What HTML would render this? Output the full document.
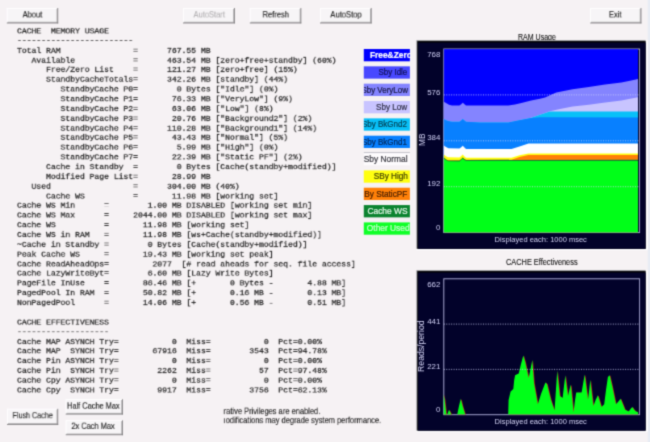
<!DOCTYPE html>
<html><head><meta charset="utf-8"><title>Cache Memory</title>
<style>
html,body{margin:0;padding:0;}
body{width:650px;height:442px;overflow:hidden;background:#f6f2f4;position:relative;font-family:"Liberation Sans",sans-serif;}
pre{position:absolute;left:17.2px;top:26.68px;margin:0;font-family:"Liberation Mono",monospace;font-size:10px;line-height:13.857px;color:#262626;-webkit-text-stroke:0.3px #262626;letter-spacing:0;width:500px;overflow:hidden;white-space:pre;transform:scale(0.8066,0.70);transform-origin:0 0;}
.btn{position:absolute;box-sizing:border-box;text-align:center;font-size:10px;transform:scale(0.8);transform-origin:0 0;color:#242424;-webkit-text-stroke:0.19px;white-space:nowrap;overflow:hidden;}
.btn span{display:inline-block;transform-origin:50% 50%;position:relative;top:0px;margin:0 -10px;}
.btn.dis{color:#b4b2b4;}
.leg{position:absolute;left:363.8px;width:46.1px;height:12.3px;overflow:hidden;font-size:8.4px;line-height:12.3px;white-space:nowrap;}
.leg span{position:absolute;top:0.2px;transform-origin:100% 50%;-webkit-text-stroke:0.2px;}
.ttl{position:absolute;font-size:8.6px;color:#161616;-webkit-text-stroke:0.12px;white-space:nowrap;transform-origin:0 50%;}
.note{position:absolute;left:223px;top:407px;width:240px;overflow:hidden;font-size:10px;color:#1c1c1c;-webkit-text-stroke:0.18px;white-space:pre;line-height:10.976px;transform:translate(0.6px,0.6px) scale(0.75,0.82);transform-origin:0 0;}
pre .d{position:relative;top:-1.1px;}
svg{position:absolute;left:0;top:0;z-index:0;}
.btn,.leg,.ttl,.note,pre{z-index:1;will-change:transform;}
svg{will-change:transform;}
svg text{font-family:"Liberation Sans",sans-serif;}
#w{position:absolute;left:0;top:0;width:650px;height:442px;overflow:hidden;background:#f6f2f4;filter:url(#gb);}
#fd{position:absolute;left:0;top:0;width:0;height:0;}
</style></head><body>
<svg id="fd" width="0" height="0"><defs><filter id="gb" x="0" y="0" width="100%" height="100%" color-interpolation-filters="sRGB"><feConvolveMatrix order="3" kernelMatrix="0.0276 0.1106 0.0276 0.1106 0.4444 0.1106 0.0276 0.1106 0.0276" edgeMode="duplicate" preserveAlpha="true"/></filter></defs></svg>
<div id="w">
<pre>CACHE  MEMORY USAGE
<span class="d">------------------------</span>
Total RAM               =      767.55 MB
   Available            =      463.54 MB [zero+free+standby] (60%)
      Free/Zero List    =      121.27 MB [zero+free] (15%)
      StandbyCacheTotals=      342.26 MB [standby] (44%)
         StandbyCache P0=        0 Bytes ["Idle"] (0%)
         StandbyCache P1=       76.33 MB ["VeryLow"] (9%)
         StandbyCache P2=       63.06 MB ["Low"] (8%)
         StandbyCache P3=       20.76 MB ["Background2"] (2%)
         StandbyCache P4=      110.28 MB ["Background1"] (14%)
         StandbyCache P5=       43.43 MB ["Normal"] (5%)
         StandbyCache P6=        5.99 MB ["High"] (0%)
         StandbyCache P7=       22.39 MB ["Static PF"] (2%)
      Cache in Standby  =        0 Bytes [Cache(standby+modified)]
      Modified Page List=       28.99 MB
   Used                 =      304.00 MB (40%)
      Cache WS          =       11.98 MB [working set]
Cache WS Min      =        1.00 MB DISABLED [working set min]
Cache WS Max      =     2044.00 MB DISABLED [working set max]
Cache WS          =       11.98 MB [working set]
Cache WS in RAM   =       11.98 MB [ws+Cache(standby+modified)]
~Cache in Standby =        0 Bytes [Cache(standby+modified)]
Peak Cache WS     =       19.43 MB [working set peak]
Cache ReadAheadOps=         2077  [# read aheads for seq. file access]
Cache LazyWriteByt=        6.60 MB [Lazy Write Bytes]
PageFile InUse    =       86.46 MB [+       0 Bytes -       4.88 MB]
PagedPool In RAM  =       50.82 MB [+       0.16 MB -       0.13 MB]
NonPagedPool      =       14.06 MB [+       0.56 MB -       0.51 MB]

CACHE EFFECTIVENESS
<span class="d">-------------------</span>
Cache MAP ASYNCH Try=           0  Miss=           0  Pct=0.00%
Cache MAP  SYNCH Try=       67916  Miss=        3543  Pct=94.78%
Cache Pin ASYNCH Try=           0  Miss=           0  Pct=0.00%
Cache Pin  SYNCH Try=        2262  Miss=          57  Pct=97.48%
Cache Cpy ASYNCH Try=           0  Miss=           0  Pct=0.00%
Cache Cpy  SYNCH Try=        9917  Miss=        3756  Pct=62.13%</pre>
<div class="btn" style="left:6px;top:7px;width:64.25px;height:19.25px;line-height:17.25px;transform:translate(0.80px,0.85px) scale(0.8)"><span style="transform:scaleX(0.946);left:0.0px">About</span></div>
<div class="btn dis" style="left:183px;top:7px;width:64.75px;height:19.25px;line-height:17.25px;transform:translate(0.00px,0.85px) scale(0.8)"><span style="transform:scaleX(0.935);left:0.0px">AutoStart</span></div>
<div class="btn" style="left:249px;top:7px;width:64.38px;height:19.25px;line-height:17.25px;transform:translate(0.80px,0.85px) scale(0.8)"><span style="transform:scaleX(0.946);left:0.0px">Refresh</span></div>
<div class="btn" style="left:320px;top:7px;width:64.50px;height:19.25px;line-height:17.25px;transform:translate(0.00px,0.85px) scale(0.8)"><span style="transform:scaleX(0.946);left:0.0px">AutoStop</span></div>
<div class="btn" style="left:590px;top:7px;width:64.00px;height:19.25px;line-height:17.25px;transform:translate(0.20px,0.85px) scale(0.8)"><span style="transform:scaleX(0.946);left:-0.9px">Exit</span></div>
<div class="btn" style="left:7px;top:408px;width:64.00px;height:20.00px;line-height:18.00px;transform:translate(0.00px,0.70px) scale(0.8)"><span style="transform:scaleX(0.894);left:0.0px">Flush Cache</span></div>
<div class="btn" style="left:65px;top:399px;width:71.50px;height:19.13px;line-height:17.13px;transform:translate(0.70px,0.10px) scale(0.8)"><span style="transform:scaleX(0.924);left:-0.7px">Half Cache Max</span></div>
<div class="btn" style="left:65px;top:420px;width:71.50px;height:18.62px;line-height:16.62px;transform:translate(0.70px,0.20px) scale(0.8)"><span style="transform:scaleX(0.924);left:-1.1px">2x Cach Max</span></div>
<div class="leg" style="top:49.00px;color:#ffffff;"><span style="left:5.9px;transform:none;font-weight:bold;">Free&amp;Zero</span></div>
<div class="leg" style="top:66.34px;color:#101058;"><span style="right:2.6px;transform:scaleX(0.95);">Sby Idle</span></div>
<div class="leg" style="top:83.68px;color:#181844;"><span style="right:2.6px;transform:scaleX(0.95);">Sby VeryLow</span></div>
<div class="leg" style="top:101.02px;color:#303048;"><span style="right:2.6px;transform:scaleX(0.97);">Sby Low</span></div>
<div class="leg" style="top:118.36px;color:#044054;"><span style="right:2.6px;transform:scaleX(0.96);">Sby BkGnd2</span></div>
<div class="leg" style="top:135.70px;color:#042858;"><span style="right:2.6px;transform:scaleX(0.96);">Sby BkGnd1</span></div>
<div class="leg" style="top:153.04px;color:#383840;"><span style="right:2.6px;transform:scaleX(1.0);">Sby Normal</span></div>
<div class="leg" style="top:170.38px;color:#404004;"><span style="right:2.6px;transform:scaleX(0.98);">SBy High</span></div>
<div class="leg" style="top:187.72px;color:#441c00;"><span style="right:2.6px;transform:scaleX(0.985);">SBy StaticPF</span></div>
<div class="leg" style="top:205.06px;color:#e8f8ec;"><span style="right:2.6px;transform:scaleX(1.0);">Cache WS</span></div>
<div class="leg" style="top:222.40px;color:#c8ffd0;"><span style="left:2.8px;transform:none;">Other Used</span></div>

<div class="ttl" style="left:517.6px;top:32.2px;height:8.4px;overflow:hidden;line-height:10px;"><span style="display:inline-block;transform:scaleX(0.818);transform-origin:0 50%;">RAM Usage</span></div>
<div class="ttl" style="left:505.6px;top:257px;line-height:10px;"><span style="display:inline-block;transform:scaleX(0.858);transform-origin:0 50%;">CACHE Effectiveness</span></div>
<div class="note">rative Privileges are enabled.
&#305;odifications may degrade system performance.</div>
<svg width="650" height="442" viewBox="0 0 650 442">
 <defs><clipPath id="c1"><rect x="443.2" y="49" width="194.8" height="183.7"/></clipPath><clipPath id="c2"><rect x="443.2" y="278.8" width="194.9" height="135.9"/></clipPath></defs>
 <rect x="647.7" y="0" width="2.3" height="442" fill="#e8ecf4"/>
 <rect x="6.80" y="8.00" width="51.40" height="15.40" fill="#f7f5f7"/><rect x="6.80" y="8.00" width="50.60" height="0.80" fill="#ffffff"/><rect x="6.80" y="8.00" width="0.80" height="14.60" fill="#ffffff"/><rect x="7.60" y="21.80" width="49.80" height="0.80" fill="#acaaac"/><rect x="56.60" y="8.80" width="0.80" height="13.80" fill="#acaaac"/><rect x="6.80" y="22.60" width="51.40" height="0.80" fill="#767476"/><rect x="57.40" y="8.00" width="0.80" height="15.40" fill="#767476"/>
<rect x="183.00" y="8.00" width="51.80" height="15.40" fill="#f7f5f7"/><rect x="183.00" y="8.00" width="51.00" height="0.80" fill="#ffffff"/><rect x="183.00" y="8.00" width="0.80" height="14.60" fill="#ffffff"/><rect x="183.80" y="21.80" width="50.20" height="0.80" fill="#acaaac"/><rect x="233.20" y="8.80" width="0.80" height="13.80" fill="#acaaac"/><rect x="183.00" y="22.60" width="51.80" height="0.80" fill="#767476"/><rect x="234.00" y="8.00" width="0.80" height="15.40" fill="#767476"/>
<rect x="249.80" y="8.00" width="51.50" height="15.40" fill="#f7f5f7"/><rect x="249.80" y="8.00" width="50.70" height="0.80" fill="#ffffff"/><rect x="249.80" y="8.00" width="0.80" height="14.60" fill="#ffffff"/><rect x="250.60" y="21.80" width="49.90" height="0.80" fill="#acaaac"/><rect x="299.70" y="8.80" width="0.80" height="13.80" fill="#acaaac"/><rect x="249.80" y="22.60" width="51.50" height="0.80" fill="#767476"/><rect x="300.50" y="8.00" width="0.80" height="15.40" fill="#767476"/>
<rect x="320.00" y="8.00" width="51.60" height="15.40" fill="#f7f5f7"/><rect x="320.00" y="8.00" width="50.80" height="0.80" fill="#ffffff"/><rect x="320.00" y="8.00" width="0.80" height="14.60" fill="#ffffff"/><rect x="320.80" y="21.80" width="50.00" height="0.80" fill="#acaaac"/><rect x="370.00" y="8.80" width="0.80" height="13.80" fill="#acaaac"/><rect x="320.00" y="22.60" width="51.60" height="0.80" fill="#767476"/><rect x="370.80" y="8.00" width="0.80" height="15.40" fill="#767476"/>
<rect x="590.20" y="8.00" width="51.20" height="15.40" fill="#f7f5f7"/><rect x="590.20" y="8.00" width="50.40" height="0.80" fill="#ffffff"/><rect x="590.20" y="8.00" width="0.80" height="14.60" fill="#ffffff"/><rect x="591.00" y="21.80" width="49.60" height="0.80" fill="#acaaac"/><rect x="639.80" y="8.80" width="0.80" height="13.80" fill="#acaaac"/><rect x="590.20" y="22.60" width="51.20" height="0.80" fill="#767476"/><rect x="640.60" y="8.00" width="0.80" height="15.40" fill="#767476"/>
<rect x="7.00" y="408.80" width="51.20" height="16.00" fill="#f7f5f7"/><rect x="7.00" y="408.80" width="50.40" height="0.80" fill="#ffffff"/><rect x="7.00" y="408.80" width="0.80" height="15.20" fill="#ffffff"/><rect x="7.80" y="423.20" width="49.60" height="0.80" fill="#acaaac"/><rect x="56.60" y="409.60" width="0.80" height="14.40" fill="#acaaac"/><rect x="7.00" y="424.00" width="51.20" height="0.80" fill="#767476"/><rect x="57.40" y="408.80" width="0.80" height="16.00" fill="#767476"/>
<rect x="65.70" y="399.20" width="57.20" height="15.30" fill="#f7f5f7"/><rect x="65.70" y="399.20" width="56.40" height="0.80" fill="#ffffff"/><rect x="65.70" y="399.20" width="0.80" height="14.50" fill="#ffffff"/><rect x="66.50" y="412.90" width="55.60" height="0.80" fill="#acaaac"/><rect x="121.30" y="400.00" width="0.80" height="13.70" fill="#acaaac"/><rect x="65.70" y="413.70" width="57.20" height="0.80" fill="#767476"/><rect x="122.10" y="399.20" width="0.80" height="15.30" fill="#767476"/>
<rect x="65.70" y="420.30" width="57.20" height="14.90" fill="#f7f5f7"/><rect x="65.70" y="420.30" width="56.40" height="0.80" fill="#ffffff"/><rect x="65.70" y="420.30" width="0.80" height="14.10" fill="#ffffff"/><rect x="66.50" y="433.60" width="55.60" height="0.80" fill="#acaaac"/><rect x="121.30" y="421.10" width="0.80" height="13.30" fill="#acaaac"/><rect x="65.70" y="434.40" width="57.20" height="0.80" fill="#767476"/><rect x="122.10" y="420.30" width="0.80" height="14.90" fill="#767476"/>
<rect x="363.8" y="49.00" width="46.1" height="12.3" fill="#0000ff"/><rect x="363.8" y="66.34" width="46.1" height="12.3" fill="#4848ff"/><rect x="363.8" y="83.68" width="46.1" height="12.3" fill="#8484ff"/><rect x="363.8" y="101.02" width="46.1" height="12.3" fill="#c8c4ff"/><rect x="363.8" y="118.36" width="46.1" height="12.3" fill="#08c0f8"/><rect x="363.8" y="135.70" width="46.1" height="12.3" fill="#0880ff"/><rect x="363.8" y="153.04" width="46.1" height="12.3" fill="#fdfbfd"/><rect x="363.8" y="152.24" width="46.1" height="0.8" fill="#b8b8c0"/><rect x="363.8" y="170.38" width="46.1" height="12.3" fill="#ffff10"/><rect x="363.8" y="187.72" width="46.1" height="12.3" fill="#ff8008"/><rect x="363.8" y="205.06" width="46.1" height="12.3" fill="#0c8430"/><rect x="363.8" y="222.40" width="46.1" height="12.3" fill="#10ff28"/>
 <!-- RAM chart panel -->
 <rect x="416.4" y="40.2" width="231.2" height="210.0" fill="#ffffff"/>
 <rect x="416.4" y="40.2" width="229.2" height="208.6" fill="#8c8c90"/>
 <rect x="417.3" y="41.1" width="228.3" height="207.7" fill="#000004"/>
 <rect x="418.2" y="42.6" width="227.4" height="206.2" fill="#02022a"/>
 <rect x="443.8" y="49.0" width="195.8" height="183.6" fill="none" stroke="#a0a0cc" stroke-width="0.9"/>
 <g clip-path="url(#c1)"><polygon points="443.8,49.0 639.6,49.0 639.6,232.6 443.8,232.6" fill="#0000ff"/>
<polygon points="443.8,101.7 446.0,103.0 449.0,104.7 452.0,105.4 459.5,105.5 461.5,104.0 462.8,102.7 464.2,104.0 466.0,105.5 508.4,105.5 515.0,104.4 521.4,103.0 531.2,100.6 540.0,98.7 545.0,97.4 556.3,92.6 572.6,89.3 588.8,86.9 605.1,84.4 621.4,82.5 630.0,80.8 639.6,78.5 639.6,232.6 443.8,232.6" fill="#8484ff"/>
<polygon points="443.8,119.0 446.0,120.3 449.0,121.3 452.0,121.7 459.5,121.7 461.5,120.3 462.8,119.0 464.2,120.3 466.0,121.7 480.0,122.4 485.6,122.6 508.4,122.6 518.0,120.6 531.2,117.7 540.0,114.7 549.8,111.3 560.0,109.0 572.6,106.4 588.8,104.8 605.1,102.6 621.4,100.4 630.0,98.8 639.6,96.8 639.6,232.6 443.8,232.6" fill="#c8c4ff"/>
<polygon points="443.8,119.0 446.0,120.3 449.0,121.3 452.0,121.7 459.5,121.7 461.5,120.3 462.8,119.0 464.2,120.3 466.0,121.7 480.0,122.4 485.6,122.6 508.4,122.6 518.0,120.6 531.2,117.7 540.0,114.7 549.8,111.5 560.0,111.5 639.6,111.6 639.6,232.6 443.8,232.6" fill="#08c0f8"/>
<polygon points="443.8,119.0 446.0,120.3 449.0,121.3 452.0,121.7 459.5,121.7 461.5,120.3 462.8,119.0 464.2,120.3 466.0,121.7 480.0,122.4 485.6,122.6 508.4,122.6 518.0,120.6 531.2,117.9 540.0,117.2 549.8,117.3 639.6,117.4 639.6,232.6 443.8,232.6" fill="#0880ff"/>
<polygon points="443.8,145.4 446.0,147.0 448.5,148.3 459.5,148.5 461.5,147.0 462.8,145.8 464.2,147.2 466.0,149.0 511.5,149.0 519.5,146.6 524.0,145.0 528.5,143.4 639.6,143.4 639.6,232.6 443.8,232.6" fill="#ffffff"/>
<polygon points="443.8,154.4 446.0,156.2 448.0,157.2 459.5,157.4 461.5,155.8 462.8,154.6 464.2,156.2 466.0,157.8 511.5,157.8 519.5,155.2 528.5,153.6 639.6,153.6 639.6,232.6 443.8,232.6" fill="#ffff10"/>
<polygon points="443.8,157.3 446.0,159.2 448.0,160.2 459.5,160.3 461.5,158.7 462.8,157.4 464.2,158.8 466.0,159.7 511.5,159.7 519.5,156.9 528.5,154.9 639.6,154.9 639.6,232.6 443.8,232.6" fill="#ff8008"/>
<polygon points="443.8,157.5 446.0,159.4 448.0,160.4 459.5,160.5 461.5,158.9 462.8,157.6 464.2,159.0 466.0,159.9 639.6,159.8 639.6,232.6 443.8,232.6" fill="#0c8430"/>
<polygon points="443.8,158.5 446.0,160.3 448.0,161.3 459.5,161.4 461.5,159.8 462.8,158.6 464.2,160.0 466.0,161.0 639.6,161.0 639.6,232.6 443.8,232.6" fill="#00ff18"/></g><line x1="443.8" y1="94.9" x2="639.6" y2="94.9" stroke="#d0d4f8" stroke-opacity="0.85" stroke-width="0.95" stroke-dasharray="1 1.45"/><line x1="443.8" y1="140.8" x2="639.6" y2="140.8" stroke="#d0d4f8" stroke-opacity="0.85" stroke-width="0.95" stroke-dasharray="1 1.45"/><line x1="443.8" y1="186.7" x2="639.6" y2="186.7" stroke="#d0d4f8" stroke-opacity="0.85" stroke-width="0.95" stroke-dasharray="1 1.45"/>
 <rect x="443.8" y="49.0" width="195.8" height="183.6" fill="none" stroke="#b4b4d8" stroke-width="0.9" stroke-opacity="0.3"/>
 <g fill="#d0d0f4" font-size="7.9" text-anchor="end">
  <text x="440.4" y="56.9">768</text>
  <text x="440.4" y="95.0">576</text>
  <text x="440.4" y="140.4">384</text>
  <text x="440.4" y="186.0">192</text>
  <text x="440.4" y="229.5">0</text>
 </g>
 <text transform="translate(425.4,145.9) rotate(-90)" fill="#d4d4f4" font-size="8.3">MB</text>
 <text x="494.6" y="242.1" fill="#d4d4f4" font-size="7.7" textLength="92.3" lengthAdjust="spacingAndGlyphs">Displayed each: 1000 msec</text>

 <!-- Effectiveness chart panel -->
 <rect x="416.4" y="270.2" width="231.2" height="161.8" fill="#ffffff"/>
 <rect x="416.4" y="270.2" width="229.2" height="160.4" fill="#8c8c90"/>
 <rect x="417.3" y="271.1" width="228.3" height="159.5" fill="#000004"/>
 <rect x="418.2" y="272.6" width="227.4" height="158.0" fill="#02022a"/>
 <rect x="443.8" y="278.8" width="195.8" height="135.9" fill="none" stroke="#a0a0cc" stroke-width="0.9"/>
 <g clip-path="url(#c2)"><polygon points="443.6,414.7 443.6,394.3 444.6,399.0 446.3,414.0 447.2,414.7 449.0,409.7 451.6,414.7 457.2,414.7 459.0,406.0 460.8,398.8 462.6,406.0 465.3,414.7 508.2,414.7 508.6,400.0 510.6,391.6 513.3,388.9 514.2,380.0 515.1,375.3 518.7,373.5 521.0,364.0 523.3,355.4 525.2,362.0 528.7,378.0 530.5,369.0 532.3,360.0 533.2,372.0 534.1,383.4 537.8,404.3 541.0,394.0 545.4,382.5 547.0,384.0 550.9,399.7 554.5,410.6 555.6,395.0 557.2,370.8 558.5,383.0 559.9,396.1 562.6,397.9 564.0,386.0 565.3,375.3 566.6,386.0 568.0,396.1 569.4,390.0 570.8,384.4 572.2,398.0 573.5,412.4 574.8,402.0 576.2,392.5 581.6,392.5 583.2,383.0 584.7,374.4 586.3,387.0 588.0,399.7 589.2,390.0 590.3,379.8 591.8,393.0 593.4,406.0 595.6,400.0 597.9,395.2 599.7,401.0 601.5,407.0 604.2,404.3 606.0,390.0 607.9,377.1 609.7,375.3 612.4,387.0 616.0,404.3 618.4,401.5 620.6,398.8 622.8,404.0 625.1,409.7 628.7,411.5 630.5,409.0 632.3,407.0 634.0,409.5 635.9,411.5 639.4,412.4 639.4,414.7" fill="#c81818" transform="translate(0.7,0.3)"/><polygon points="443.6,414.7 443.6,394.3 444.6,399.0 446.3,414.0 447.2,414.7 449.0,409.7 451.6,414.7 457.2,414.7 459.0,406.0 460.8,398.8 462.6,406.0 465.3,414.7 508.2,414.7 508.6,400.0 510.6,391.6 513.3,388.9 514.2,380.0 515.1,375.3 518.7,373.5 521.0,364.0 523.3,355.4 525.2,362.0 528.7,378.0 530.5,369.0 532.3,360.0 533.2,372.0 534.1,383.4 537.8,404.3 541.0,394.0 545.4,382.5 547.0,384.0 550.9,399.7 554.5,410.6 555.6,395.0 557.2,370.8 558.5,383.0 559.9,396.1 562.6,397.9 564.0,386.0 565.3,375.3 566.6,386.0 568.0,396.1 569.4,390.0 570.8,384.4 572.2,398.0 573.5,412.4 574.8,402.0 576.2,392.5 581.6,392.5 583.2,383.0 584.7,374.4 586.3,387.0 588.0,399.7 589.2,390.0 590.3,379.8 591.8,393.0 593.4,406.0 595.6,400.0 597.9,395.2 599.7,401.0 601.5,407.0 604.2,404.3 606.0,390.0 607.9,377.1 609.7,375.3 612.4,387.0 616.0,404.3 618.4,401.5 620.6,398.8 622.8,404.0 625.1,409.7 628.7,411.5 630.5,409.0 632.3,407.0 634.0,409.5 635.9,411.5 639.4,412.4 639.4,414.7" fill="#00ff18"/></g><line x1="443.8" y1="324.1" x2="639.6" y2="324.1" stroke="#d0d4f8" stroke-opacity="0.85" stroke-width="0.95" stroke-dasharray="1 1.45"/><line x1="443.8" y1="369.4" x2="639.6" y2="369.4" stroke="#d0d4f8" stroke-opacity="0.85" stroke-width="0.95" stroke-dasharray="1 1.45"/>
 <rect x="443.8" y="278.8" width="195.8" height="135.9" fill="none" stroke="#b4b4d8" stroke-width="0.9" stroke-opacity="0.3"/>
 <g fill="#d0d0f4" font-size="7.9" text-anchor="end">
  <text x="440.4" y="286.6">662</text>
  <text x="440.4" y="323.8">441</text>
  <text x="440.4" y="369.3">221</text>
  <text x="440.4" y="412.0">0</text>
 </g>
 <text transform="translate(423.9,371.9) rotate(-90)" fill="#d4d4f4" font-size="8.3" textLength="51.4" lengthAdjust="spacingAndGlyphs">Reads/period</text>
 <text x="494.6" y="424.2" fill="#d4d4f4" font-size="7.7" textLength="92.3" lengthAdjust="spacingAndGlyphs">Displayed each: 1000 msec</text>
</svg>
</div>
</body></html>
